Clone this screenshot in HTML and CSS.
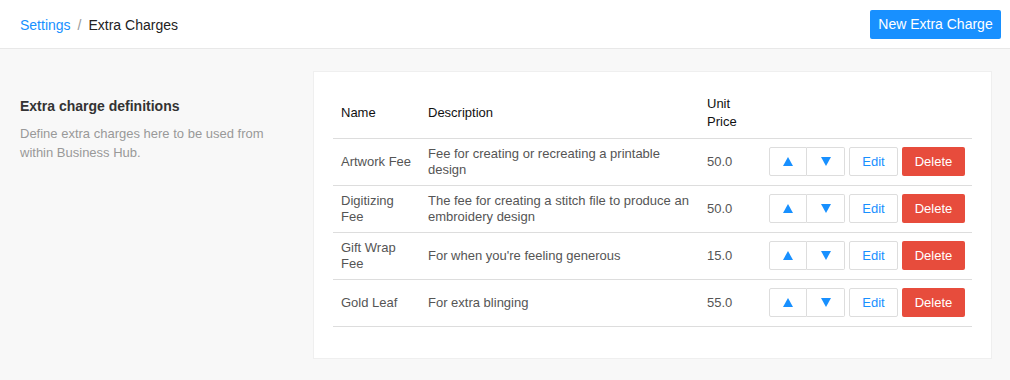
FILE: index.html
```html
<!DOCTYPE html>
<html>
<head>
<meta charset="utf-8">
<link rel="stylesheet" href="styles.css">
</head>
<body>
<header class="topbar">
  <nav class="crumbs"><a class="crumb-link">Settings</a><span class="sep">/</span><span class="crumb-current">Extra Charges</span></nav>
  <button class="btn-primary">New Extra Charge</button>
</header>
<main class="main">
  <aside class="intro">
    <h2 class="intro-title">Extra charge definitions</h2>
    <p class="intro-text">Define extra charges here to be used from within Business Hub.</p>
  </aside>
  <section class="card">
    <table class="charges">
      <colgroup><col class="c-name"><col class="c-desc"><col class="c-price"><col class="c-act"></colgroup>
      <thead>
        <tr><th>Name</th><th>Description</th><th>Unit<br>Price</th><th></th></tr>
      </thead>
      <tbody>
        <tr><td>Artwork Fee</td><td>Fee for creating or recreating a printable design</td><td>50.0</td><td class="acts"><span class="grp"><button class="btn-arrow"><svg width="10" height="9" viewBox="0 0 10 9"><path d="M5 0L10 9H0Z"/></svg></button><button class="btn-arrow"><svg width="10" height="9" viewBox="0 0 10 9"><path d="M0 0H10L5 9Z"/></svg></button></span><button class="btn-edit">Edit</button><button class="btn-del">Delete</button></td></tr>
        <tr><td>Digitizing Fee</td><td>The fee for creating a stitch file to produce an embroidery design</td><td>50.0</td><td class="acts"><span class="grp"><button class="btn-arrow"><svg width="10" height="9" viewBox="0 0 10 9"><path d="M5 0L10 9H0Z"/></svg></button><button class="btn-arrow"><svg width="10" height="9" viewBox="0 0 10 9"><path d="M0 0H10L5 9Z"/></svg></button></span><button class="btn-edit">Edit</button><button class="btn-del">Delete</button></td></tr>
        <tr><td>Gift Wrap Fee</td><td>For when you're feeling generous</td><td>15.0</td><td class="acts"><span class="grp"><button class="btn-arrow"><svg width="10" height="9" viewBox="0 0 10 9"><path d="M5 0L10 9H0Z"/></svg></button><button class="btn-arrow"><svg width="10" height="9" viewBox="0 0 10 9"><path d="M0 0H10L5 9Z"/></svg></button></span><button class="btn-edit">Edit</button><button class="btn-del">Delete</button></td></tr>
        <tr><td>Gold Leaf</td><td>For extra blinging</td><td>55.0</td><td class="acts"><span class="grp"><button class="btn-arrow"><svg width="10" height="9" viewBox="0 0 10 9"><path d="M5 0L10 9H0Z"/></svg></button><button class="btn-arrow"><svg width="10" height="9" viewBox="0 0 10 9"><path d="M0 0H10L5 9Z"/></svg></button></span><button class="btn-edit">Edit</button><button class="btn-del">Delete</button></td></tr>
      </tbody>
    </table>
  </section>
</main>
</body>
</html>
```

FILE: styles.css
```css
* { box-sizing: border-box; }
html, body { margin: 0; padding: 0; }
body {
  font-family: "Liberation Sans", Arial, sans-serif;
  background: #f8f8f8;
  color: #333;
  width: 1010px;
  height: 380px;
  overflow: hidden;
}
.topbar {
  height: 49px;
  background: #fff;
  border-bottom: 1px solid #e8e8e8;
  display: flex;
  align-items: center;
  justify-content: space-between;
  padding: 0 9px 0 20px;
}
.crumbs { font-size: 14px; display: flex; align-items: center; padding-top: 2px; }
.crumb-link { color: #1890ff; }
.sep { color: #999; margin: 0 7px; }
.crumb-current { color: #222; }
.btn-primary {
  font-family: inherit;
  font-size: 14px;
  color: #fff;
  background: #1890ff;
  border: 0;
  border-radius: 2px;
  height: 29px;
  width: 131px;
  padding: 0;
}
.main {
  display: flex;
  padding: 22px 18px 20px 20px;
}
.intro { width: 293px; padding-top: 27px; }
.intro-title { margin: 0; font-size: 14px; font-weight: bold; color: #333; line-height: 16px; }
.intro-text { margin: 10px 30px 0 0; font-size: 13px; color: #999; line-height: 19px; }
.card {
  flex: 1;
  height: 288px;
  background: #fff;
  border: 1px solid #efefef;
  padding: 20px 19px;
}
.charges {
  width: 100%;
  border-collapse: collapse;
  table-layout: fixed;
  font-size: 13px;
}
.c-name { width: 87px; }
.c-desc { width: 279px; }
.c-price { width: 62px; }
.charges th {
  text-align: left;
  font-weight: normal;
  color: #111;
  height: 46px;
  line-height: 18px;
  padding: 0 8px 4px;
  border-bottom: 1px solid #ddd;
  vertical-align: middle;
}
.charges td {
  color: #555;
  height: 47px;
  line-height: 16px;
  padding: 0 8px;
  border-bottom: 1px solid #ddd;
  vertical-align: middle;
}
.acts { white-space: nowrap; font-size: 0; }
.grp { display: inline-flex; vertical-align: middle; }
.btn-arrow, .btn-edit, .btn-del {
  font-family: "Liberation Sans", Arial, sans-serif;
  font-size: 13px;
  height: 29px;
  padding: 0;
  vertical-align: middle;
  cursor: pointer;
}
.btn-arrow {
  width: 38px;
  background: #fff;
  border: 1px solid #ddd;
  display: inline-flex;
  align-items: center;
  justify-content: center;
  fill: #1890ff;
}
.btn-arrow:first-child { border-radius: 2px 0 0 2px; }
.btn-arrow + .btn-arrow { border-left: 0; border-radius: 0 2px 2px 0; }
.btn-edit {
  width: 49px;
  margin-left: 4px;
  background: #fff;
  border: 1px solid #ddd;
  border-radius: 2px;
  color: #1890ff;
}
.btn-del {
  width: 63px;
  margin-left: 4px;
  background: #e74c3c;
  border: 0;
  border-radius: 2px;
  color: #fff;
}
```
